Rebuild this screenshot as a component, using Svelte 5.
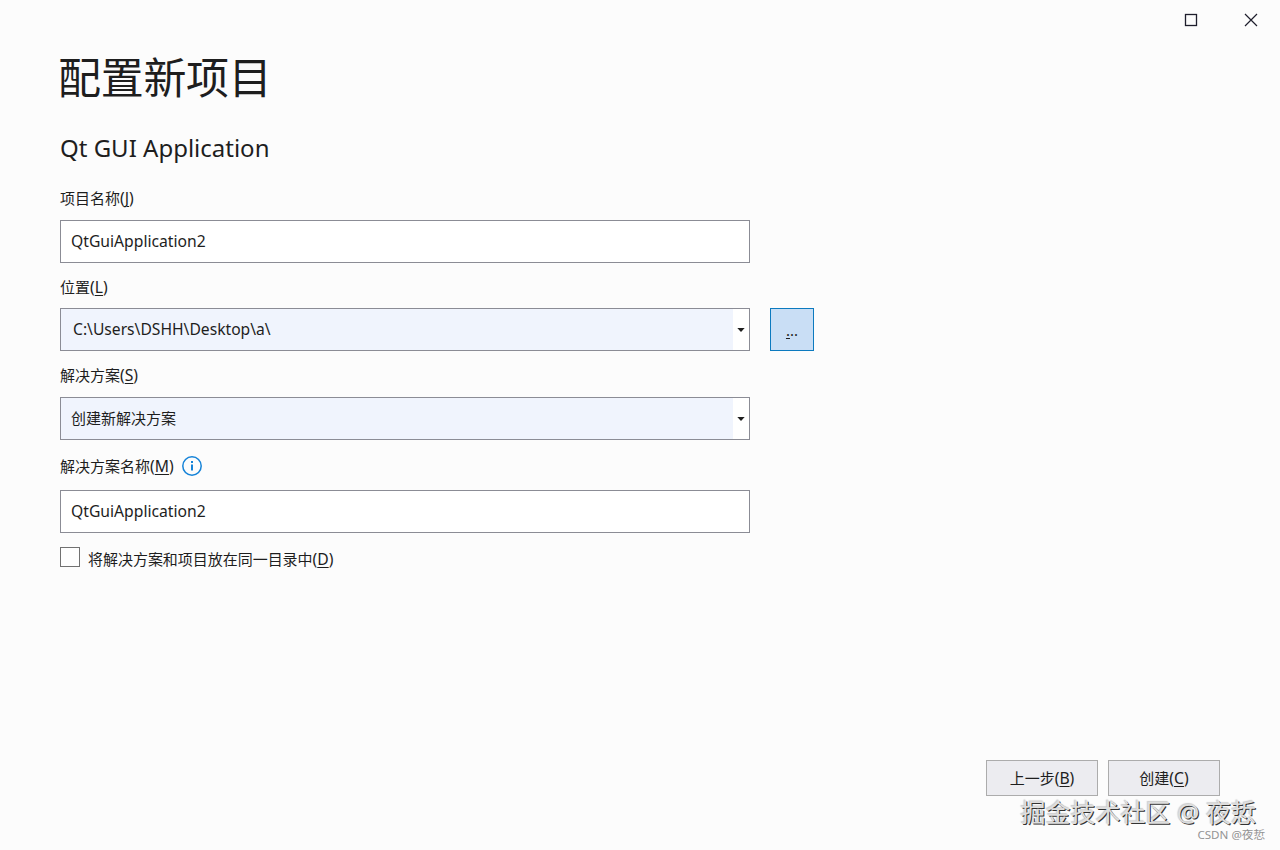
<script lang="ts">
	let projectName = $state('QtGuiApplication2');
	let solutionName = $state('QtGuiApplication2');
	let sameFolder = $state(false);
	const location = 'C:\\Users\\DSHH\\Desktop\\a\\';
</script>

{#snippet caption(text: string, key: string)}
	<span class="caption">{text}<span class="key">(<u>{key}</u>)</span></span>
{/snippet}

{#snippet arrow()}
	<span class="arrow">
		<svg width="8" height="4" viewBox="0 0 8 4"><path d="M0.3 0h7.4L4 4z" fill="#1e1e1e" /></svg>
	</span>
{/snippet}

<div class="dialog">
	<header class="titlebar">
		<button class="win" aria-label="最大化">
			<svg width="14" height="14" viewBox="0 0 14 14">
				<rect x="1.5" y="1.5" width="11" height="11" fill="none" stroke="#1e1e2c" stroke-width="1.3" />
			</svg>
		</button>
		<button class="win" aria-label="关闭">
			<svg width="14" height="14" viewBox="0 0 14 14">
				<path d="M1 1l12 12M13 1L1 13" stroke="#1e1e2c" stroke-width="1.2" />
			</svg>
		</button>
	</header>

	<main>
		<h1>配置新项目</h1>
		<h2>Qt GUI Application</h2>

		<label class="label first" for="project">{@render caption('项目名称', 'J')}</label>
		<input id="project" class="box" bind:value={projectName} />

		<div class="label second">{@render caption('位置', 'L')}</div>
		<div class="line">
			<div class="box combo">
				<span class="value path">{location}</span>
				{@render arrow()}
			</div>
			<button class="browse"><u>.</u>..</button>
		</div>

		<div class="label third">{@render caption('解决方案', 'S')}</div>
		<div class="box combo">
			<span class="value">创建新解决方案</span>
			{@render arrow()}
		</div>

		<label class="label fourth" for="solution">
			{@render caption('解决方案名称', 'M')}
			<svg class="info" width="20" height="20" viewBox="0 0 20 20">
				<circle cx="10" cy="10" r="9.2" fill="none" stroke="#1583d8" stroke-width="1.5" />
				<path d="M9 5h2v2H9zM9 8.4h2v6.2H9z" fill="#1583d8" />
			</svg>
		</label>
		<input id="solution" class="box" bind:value={solutionName} />

		<label class="check">
			<input type="checkbox" bind:checked={sameFolder} />
			{@render caption('将解决方案和项目放在同一目录中', 'D')}
		</label>
	</main>

	<footer>
		<button class="action">{@render caption('上一步', 'B')}</button>
		<button class="action">{@render caption('创建', 'C')}</button>
	</footer>

	<div class="mark juejin">掘金技术社区 @ 夜悊</div>
	<div class="mark csdn">CSDN @夜悊</div>
</div>

<style>
	:global(body) {
		background: #fcfcfc;
	}

	.dialog {
		position: relative;
		display: flex;
		flex-direction: column;
		box-sizing: border-box;
		width: 1280px;
		height: 850px;
		overflow: hidden;
		background: #fcfcfc;
		color: #1e1e1e;
		font-family: 'Noto Sans', 'Noto Sans CJK SC', sans-serif;
		font-size: 15px;
	}

	button,
	input {
		font: inherit;
		color: inherit;
		margin: 0;
		padding: 0;
		box-sizing: border-box;
		border-radius: 0;
	}

	u {
		text-decoration: underline;
		text-decoration-thickness: 1px;
		text-underline-offset: 2px;
	}

	.titlebar {
		display: flex;
		justify-content: flex-end;
		height: 40px;
	}

	.win {
		display: grid;
		place-items: center;
		width: 60px;
		border: 0;
		background: none;
	}

	.win:last-child {
		width: 59px;
	}

	main {
		flex: 1;
		padding-left: 60px;
	}

	h1 {
		margin: 0 0 0 -2px;
		height: 76px;
		line-height: 75px;
		font-size: 43px;
		letter-spacing: -0.3px;
		font-weight: 400;
	}

	h2 {
		margin: 0;
		height: 64px;
		line-height: 64px;
		font-size: 24px;
		font-weight: 400;
	}

	.label {
		display: flex;
		align-items: center;
		gap: 8px;
		box-sizing: border-box;
	}

	.caption {
		white-space: nowrap;
		line-height: 20px;
	}

	.key {
		font-size: 15.7px;
	}

	.first {
		height: 40px;
		padding-bottom: 4px;
	}

	.second {
		height: 45px;
		padding-top: 2px;
	}

	.third {
		height: 46px;
		padding-top: 2px;
	}

	.fourth {
		height: 50px;
		padding-top: 2px;
	}

	.box {
		display: block;
		width: 690px;
		height: 43px;
		box-sizing: border-box;
		border: 1px solid #8b8c95;
		background: #fff;
		padding: 0 10px 1px;
		font-size: 15.7px;
		outline: none;
	}

	.line {
		display: flex;
		gap: 20px;
	}

	.combo {
		display: flex;
		padding: 0;
		background: #f0f4fd;
		font-size: 15px;
	}

	.value {
		flex: 1;
		padding-left: 10px;
		line-height: 41px;
	}

	.path {
		padding-left: 12px;
		font-size: 15.65px;
	}

	.arrow {
		display: grid;
		place-items: center;
		width: 16px;
		background: #fff;
	}

	.browse {
		width: 44px;
		height: 43px;
		border: 1px solid #0c7abf;
		background: #c9def5;
	}

	.check {
		display: flex;
		gap: 8px;
		margin-top: 14px;
	}

	.check input {
		appearance: none;
		width: 20px;
		height: 20px;
		border: 1px solid #717171;
		background: #fefefe;
	}

	.check .caption {
		line-height: 24px;
		letter-spacing: -0.03px;
	}

	footer {
		display: flex;
		justify-content: flex-end;
		gap: 10px;
		height: 90px;
		padding-right: 60px;
	}

	.action {
		width: 112px;
		height: 36px;
		border: 1px solid #acacac;
		background: #ececf0;
	}

	.mark {
		position: absolute;
		white-space: nowrap;
	}

	.juejin {
		right: 24px;
		top: 799px;
		font-size: 25px;
		line-height: 27px;
		color: #dedede;
		text-shadow: 1px 1px 0 #333, -1px -1px 1px #ccc;
	}

	.csdn {
		right: 15px;
		top: 828px;
		font-size: 11.6px;
		line-height: 14px;
		color: #939393;
	}
</style>
